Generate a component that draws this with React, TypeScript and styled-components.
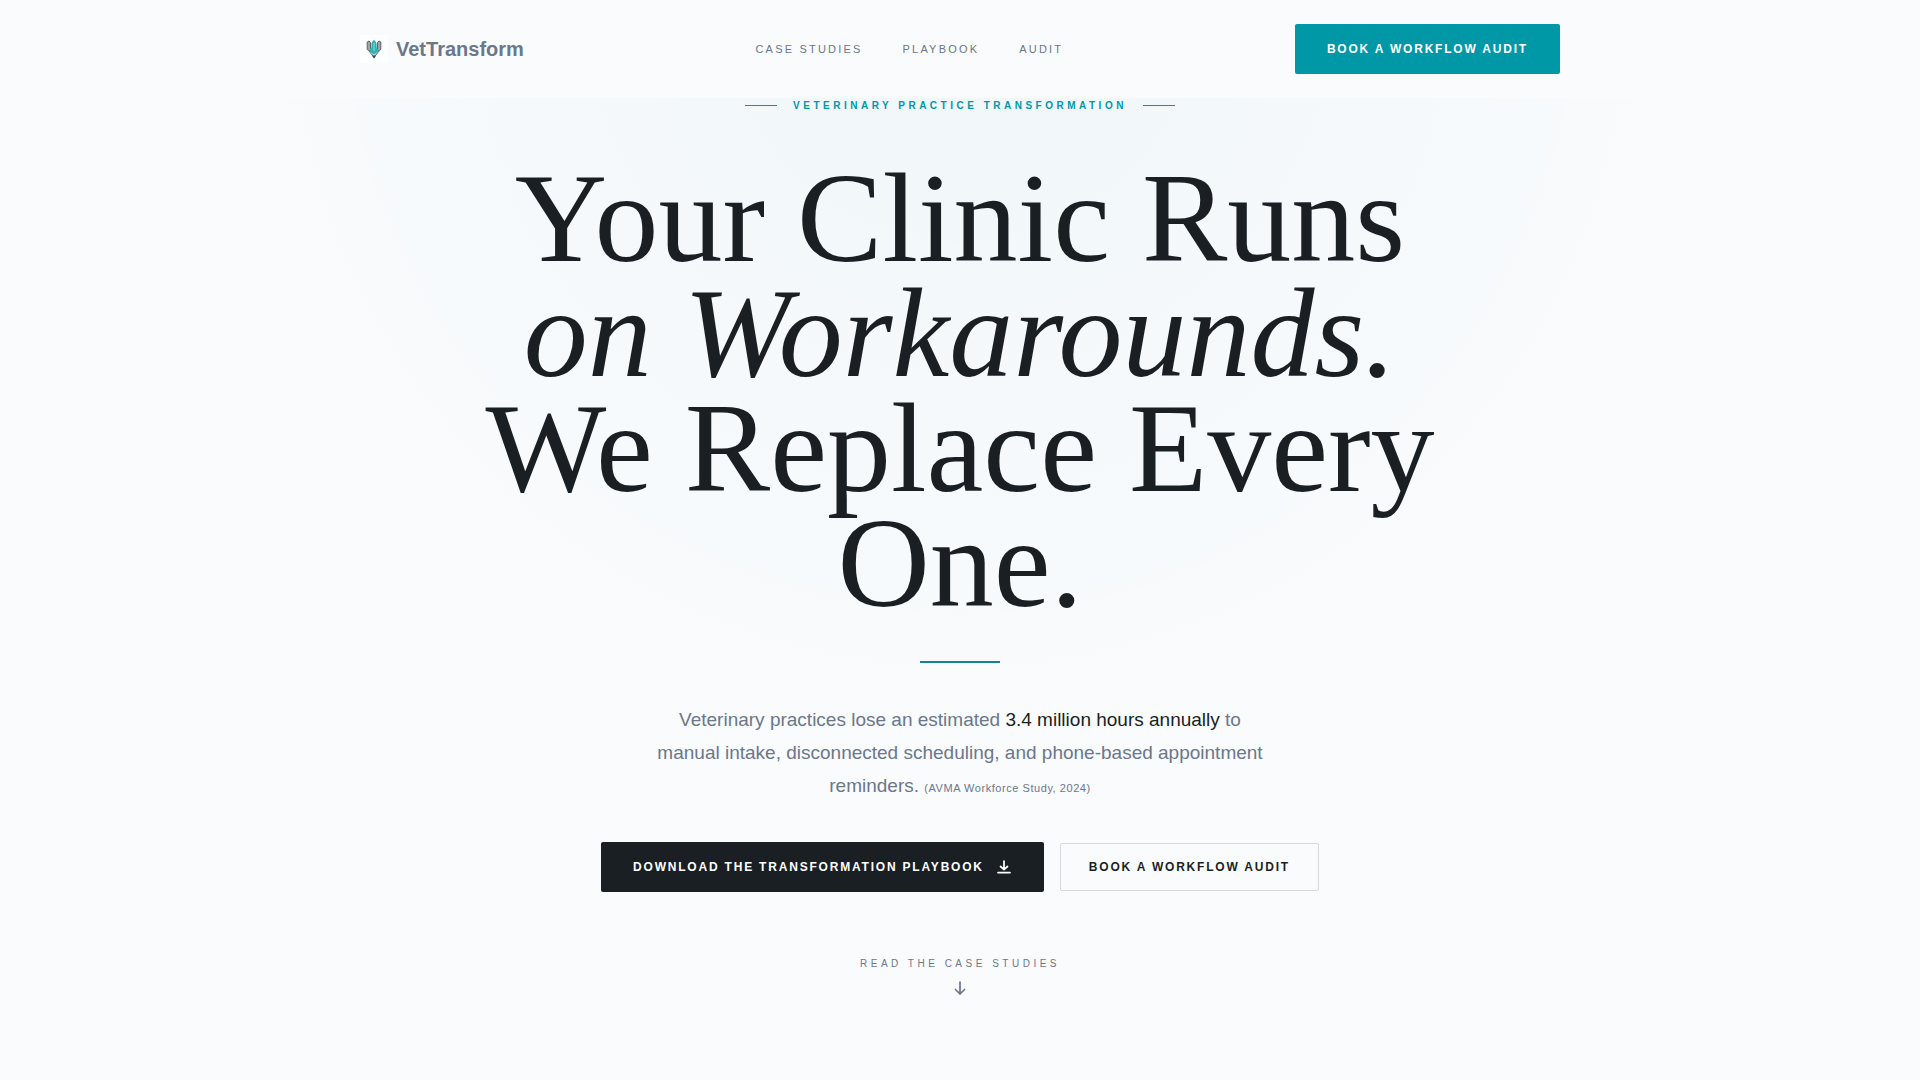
import React from "react";
import styled, { createGlobalStyle } from "styled-components";

const ink = "#1a1f24";
const slate = "#6b778a";
const teal = "#0097a7";
const paper = "#fafbfd";

const GlobalStyle = createGlobalStyle`
  *, *::before, *::after { box-sizing: border-box; }
  body {
    margin: 0;
    background: ${paper};
    color: ${ink};
    font-family: "Liberation Sans", Arial, sans-serif;
  }
`;

const Page = styled.div`
  min-height: 100vh;
  background: radial-gradient(circle 800px at 50% 0%, rgba(0, 151, 150, 0.045), transparent 100%);
`;

const Header = styled.header`
  background: ${paper};
`;

const HeaderInner = styled.div`
  display: flex;
  align-items: center;
  justify-content: space-between;
  max-width: 1200px;
  margin: 0 auto;
  padding: 24px 0;
`;

const Brand = styled.a`
  display: flex;
  align-items: center;
  gap: 8px;
  color: ${slate};
  font-size: 20px;
  font-weight: 700;
  line-height: 28px;
  text-decoration: none;
`;

const LogoMark = styled.svg`
  width: 28px;
  height: 28px;
  background: #fdfefe;
`;

const Nav = styled.nav`
  display: flex;
  gap: 40px;
`;

const NavLink = styled.a`
  color: ${slate};
  font-size: 11px;
  line-height: 16px;
  letter-spacing: 0.2em;
  text-transform: uppercase;
  text-decoration: none;
`;

const Button = styled.button<{ $variant: "teal" | "dark" | "outline" }>`
  display: inline-flex;
  align-items: center;
  gap: 12px;
  height: ${(p) => (p.$variant === "outline" ? 48 : 50)}px;
  padding: 0 ${(p) => (p.$variant === "outline" ? 28 : 32)}px;
  border: ${(p) => (p.$variant === "outline" ? "1px solid #d5dae1" : "0")};
  border-radius: 2px;
  background: ${(p) => ({ teal, dark: ink, outline: "transparent" })[p.$variant]};
  color: ${(p) => (p.$variant === "outline" ? ink : "#ffffff")};
  font-family: inherit;
  font-size: 12px;
  font-weight: 700;
  line-height: 18px;
  letter-spacing: 0.15em;
  text-transform: uppercase;
  white-space: nowrap;
  cursor: pointer;
`;

const Hero = styled.main`
  display: flex;
  flex-direction: column;
  align-items: center;
  padding: 0 24px 80px;
  text-align: center;
`;

const Eyebrow = styled.p`
  display: flex;
  align-items: center;
  gap: 16px;
  margin: 0 0 48px;
  color: ${teal};
  font-size: 10px;
  font-weight: 700;
  line-height: 15px;
  letter-spacing: 0.35em;
  text-transform: uppercase;

  &::before,
  &::after {
    content: "";
    width: 32px;
    height: 1px;
    background: ${teal};
  }
`;

const Title = styled.h1`
  max-width: 1024px;
  margin: 0 0 40px;
  font-family: "Liberation Serif", "Times New Roman", serif;
  font-size: 128px;
  font-weight: 400;
  line-height: 115px;
`;

const Divider = styled.hr`
  width: 80px;
  height: 2px;
  margin: 0 0 40px;
  border: 0;
  background: #0a8791;
`;

const Lead = styled.p`
  max-width: 620px;
  margin: 0 0 40px;
  color: ${slate};
  font-size: 19px;
  line-height: 33px;
`;

const Stat = styled.strong`
  color: ${ink};
  font-weight: 400;
`;

const Source = styled.cite`
  font-size: 11px;
  font-style: normal;
  line-height: 16px;
  letter-spacing: 0.05em;
`;

const Actions = styled.div`
  display: flex;
  align-items: center;
  justify-content: center;
  flex-wrap: wrap;
  gap: 16px;
  margin-bottom: 64px;
`;

const ScrollLink = styled.a`
  display: flex;
  flex-direction: column;
  align-items: center;
  gap: 8px;
  color: ${slate};
  font-size: 10px;
  line-height: 16px;
  letter-spacing: 0.35em;
  text-transform: uppercase;
  text-decoration: none;
`;

const Icon = styled.svg`
  width: 16px;
  height: 16px;
  fill: none;
  stroke: currentColor;
  stroke-width: 1.75;
  stroke-linecap: round;
  stroke-linejoin: round;
`;

function Logo() {
  return (
    <LogoMark viewBox="0 0 28 28" aria-hidden="true">
      <path d="M7.2 7 9 6l1.500 1.500v6.500L11 17l-3.800-2.500z" fill="#a0a4a6" stroke="#5d6267" strokeWidth="1" />
      <path d="M20.800 7 19 6l-1.500 1.500v6.500L17 17l3.800-2.500z" fill="#a0a4a6" stroke="#5d6267" strokeWidth="1" />
      <path d="M8.500 15.500 14 22.500l5.500-7z" fill="#8dd6d2" stroke="#697b80" strokeWidth="1" />
      <path d="M14 5c2 1.300 2.600 2.900 2.600 4.500v3l1.400 1.400v3.200L14 19l-4-1.900v-3.200l1.400-1.400v-3C11.400 7.900 12 6.300 14 5z" fill="#2eb5b2" />
      <path d="M14 8v8" stroke="#7cdad5" strokeWidth="1" />
      <path d="M12 20.500h4L14 23.500z" fill="#3c4146" />
    </LogoMark>
  );
}

export default function App() {
  return (
    <Page>
      <GlobalStyle />
      <Header>
        <HeaderInner>
          <Brand href="#top">
            <Logo />
            VetTransform
          </Brand>
          <Nav aria-label="Primary">
            <NavLink href="#case-studies">Case Studies</NavLink>
            <NavLink href="#playbook">Playbook</NavLink>
            <NavLink href="#audit">Audit</NavLink>
          </Nav>
          <Button type="button" $variant="teal">Book a Workflow Audit</Button>
        </HeaderInner>
      </Header>
      <Hero id="top">
        <Eyebrow>Veterinary Practice Transformation</Eyebrow>
        <Title>
          Your Clinic Runs
          <br />
          <em>on Workarounds.</em>
          <br />
          We Replace Every One.
        </Title>
        <Divider />
        <Lead>
          Veterinary practices lose an estimated <Stat>3.4 million hours annually</Stat> to manual
          intake, disconnected scheduling, and phone-based appointment reminders.{" "}
          <Source>(AVMA Workforce Study, 2024)</Source>
        </Lead>
        <Actions>
          <Button type="button" $variant="dark">
            Download the Transformation Playbook
            <Icon viewBox="0 0 16 16" aria-hidden="true">
              <path d="M8 2v8.500M4.500 7.500 8 10.500l3.500-3M2 13.500h12" />
            </Icon>
          </Button>
          <Button type="button" $variant="outline">Book a Workflow Audit</Button>
        </Actions>
        <ScrollLink href="#case-studies">
          Read the Case Studies
          <Icon viewBox="0 0 16 16" aria-hidden="true">
            <path d="M8 2v12M3.500 9.500 8 14l4.500-4.500" />
          </Icon>
        </ScrollLink>
      </Hero>
    </Page>
  );
}
